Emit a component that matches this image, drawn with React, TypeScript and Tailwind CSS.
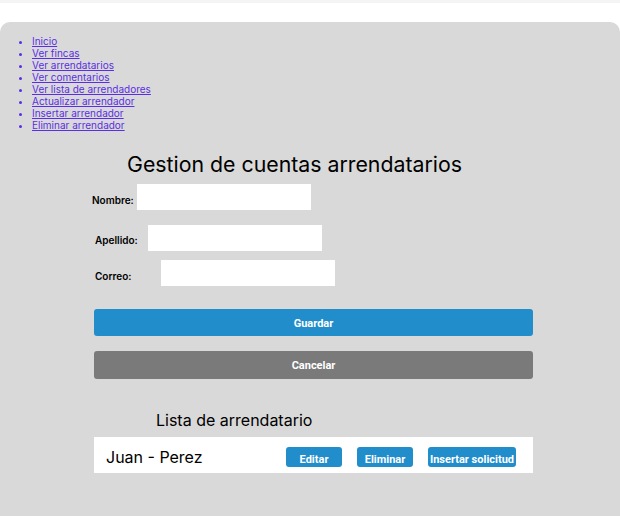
import React from "react";

const links = [
  "Inicio",
  "Ver fincas",
  "Ver arrendatarios",
  "Ver comentarios",
  "Ver lista de arrendadores",
  "Actualizar arrendador",
  "Insertar arrendador",
  "Eliminar arrendador",
];

export default function App() {
  return (
    <div className="w-[620px] h-[516px] overflow-hidden bg-white font-['Inter',sans-serif]">
      <div className="h-[3px] bg-[#f4f4f4]" />
      <div className="mt-[19px] min-h-[494px] rounded-t-[10px] bg-[#d9d9d9] pt-[13px]">
        <ul className="list-disc pl-[32px] text-[10px] leading-[12px] text-[#5b2ee6]">
          {links.map((l) => (
            <li key={l} className="marker:text-[#5b2ee6]">
              <a href="#" className="underline underline-offset-[1px]">
                {l}
              </a>
            </li>
          ))}
        </ul>

        <h1 className="mt-[21px] ml-[127px] text-[21.3px] leading-[24px] text-black">
          Gestion de cuentas arrendatarios
        </h1>

        <form className="flex flex-col">
          <div className="mt-[8px] flex items-end">
            <label className="ml-[92px] pb-[4px] text-[10px] leading-[12px] font-semibold text-black">Nombre:</label>
            <input className="ml-[3px] h-[26px] w-[174px] bg-white outline-none" />
          </div>
          <div className="mt-[15px] flex items-end">
            <label className="ml-[95px] pb-[5px] text-[10px] leading-[12px] font-semibold text-black">Apellido:</label>
            <input className="ml-[10px] h-[26px] w-[174px] bg-white outline-none" />
          </div>
          <div className="mt-[9px] flex items-end">
            <label className="ml-[95px] pb-[4px] text-[10px] leading-[12px] font-semibold text-black">Correo:</label>
            <input className="ml-[30px] h-[26px] w-[174px] bg-white outline-none" />
          </div>

          <button
            type="button"
            className="mt-[23px] ml-[94px] h-[27px] w-[439px] rounded-[3px] bg-[#228dcb] pt-[3px] font-['Roboto',sans-serif] text-[11px] font-bold text-white"
          >
            Guardar
          </button>
          <button
            type="button"
            className="mt-[15px] ml-[94px] h-[28px] w-[439px] rounded-[3px] bg-[#7a7a7a] pt-[3px] font-['Roboto',sans-serif] text-[11px] font-bold text-white"
          >
            Cancelar
          </button>
        </form>

        <h2 className="mt-[31px] ml-[156px] text-[16px] leading-[20px] text-black">Lista de arrendatario</h2>

        <div className="mt-[7px] ml-[94px] flex h-[36px] w-[439px] items-center bg-white">
          <span className="ml-[12px] mt-[3px] w-[180px] text-[16px] leading-[20px] text-black">Juan - Perez</span>
          <div className="mt-[4px] flex gap-[15px] font-['Roboto',sans-serif] text-[11px] font-bold text-white">
            <button className="h-[20px] w-[56px] rounded-[3px] bg-[#228dcb] pt-[5px] leading-[14px]">Editar</button>
            <button className="h-[20px] w-[56px] rounded-[3px] bg-[#228dcb] pt-[5px] leading-[14px]">Eliminar</button>
            <button className="h-[20px] w-[88px] rounded-[3px] bg-[#228dcb] pt-[5px] leading-[14px]">Insertar solicitud</button>
          </div>
        </div>
      </div>
    </div>
  );
}
